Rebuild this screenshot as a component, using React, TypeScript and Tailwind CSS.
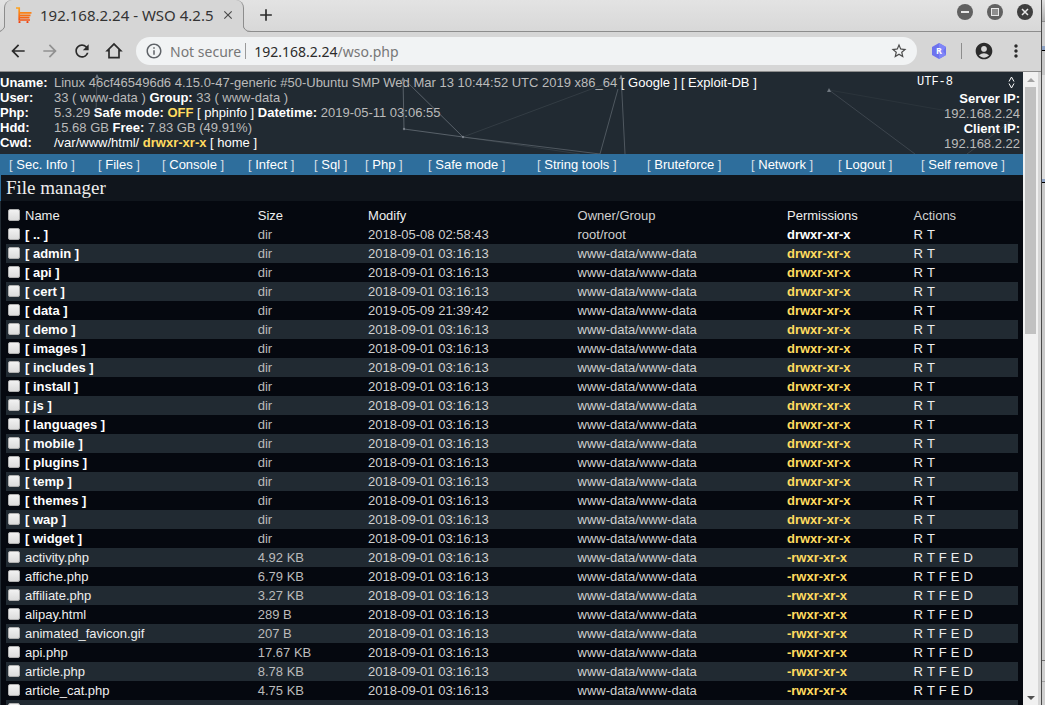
import type { ReactNode } from "react";
import {
  MdAccountCircle,
  MdAdd,
  MdArrowBack,
  MdArrowForward,
  MdClose,
  MdMoreVert,
  MdOutlineInfo,
  MdRefresh,
  MdStarBorder,
} from "react-icons/md";

type Entry = {
  name: string;
  size: string;
  modified: string;
  owner: string;
  perms: string;
};

const DEFAULT_DATE = "2018-09-01 03:16:13";
const DEFAULT_OWNER = "www-data/www-data";

function dir(name: string, modified = DEFAULT_DATE, owner = DEFAULT_OWNER): Entry {
  return { name, size: "dir", modified, owner, perms: "drwxr-xr-x" };
}

function file(name: string, size: string): Entry {
  return { name, size, modified: DEFAULT_DATE, owner: DEFAULT_OWNER, perms: "-rwxr-xr-x" };
}

const entries: Entry[] = [
  dir("..", "2018-05-08 02:58:43", "root/root"),
  dir("admin"),
  dir("api"),
  dir("cert"),
  dir("data", "2019-05-09 21:39:42"),
  dir("demo"),
  dir("images"),
  dir("includes"),
  dir("install"),
  dir("js"),
  dir("languages"),
  dir("mobile"),
  dir("plugins"),
  dir("temp"),
  dir("themes"),
  dir("wap"),
  dir("widget"),
  file("activity.php", "4.92 KB"),
  file("affiche.php", "6.79 KB"),
  file("affiliate.php", "3.27 KB"),
  file("alipay.html", "289 B"),
  file("animated_favicon.gif", "207 B"),
  file("api.php", "17.67 KB"),
  file("article.php", "8.78 KB"),
  file("article_cat.php", "4.75 KB"),
];

const menu = [
  "Sec. Info",
  "Files",
  "Console",
  "Infect",
  "Sql",
  "Php",
  "Safe mode",
  "String tools",
  "Bruteforce",
  "Network",
  "Logout",
  "Self remove",
];

export default function App() {
  return (
    <div className="flex h-screen overflow-hidden bg-[#d6d6d6] font-['Liberation_Sans',sans-serif]">
      <div className="flex min-w-0 flex-1 flex-col">
        <TabStrip />
        <Toolbar />
        <div className="flex min-h-0 flex-1 border-t border-[#8d8d8d] pr-[3px]">
          <main className="flex min-w-0 flex-1 flex-col overflow-hidden bg-[#05080f] text-[13px] leading-[15px] text-[#bbbbbb]">
            <ServerInfo />
            <Menu />
            <h1 className="border-l border-[#2e6e9c] bg-[#10151c] pl-[5px] font-['Liberation_Serif',serif] text-[19px] leading-[26px] text-[#eeeeee]">
              File manager
            </h1>
            <FileTable />
          </main>
          <Scrollbar />
        </div>
      </div>
      <Backdrop />
    </div>
  );
}

function TabStrip() {
  return (
    <div className="flex h-8 shrink-0 border-b border-[#8d8d8d] bg-linear-to-b from-[#e3e3e3] to-[#d8d8d8] font-['Noto_Sans',sans-serif]">
      <div className="relative ml-1 flex h-8 w-[240px] items-center rounded-t-lg border-x border-[#8d8d8d] bg-[#d6d6d6] pb-[2px] pl-[11px]">
        <TabFlare className="absolute bottom-0 -left-2 h-2 w-2" />
        <CartIcon />
        <span className="ml-2 text-[15px] leading-5 whitespace-nowrap text-[#333333]">192.168.2.24 - WSO 4.2.5</span>
        <button className="mr-2 ml-auto text-[#4a4a4a]" aria-label="Close tab">
          <MdClose className="h-[14px] w-[14px]" stroke="currentColor" aria-hidden />
        </button>
        <TabFlare className="absolute -right-2 bottom-0 h-2 w-2 -scale-x-100" />
      </div>
      <button className="ml-3 pb-[2px] text-[#2b2b2b]" aria-label="New tab">
        <MdAdd className="h-5 w-5" aria-hidden />
      </button>
      <div className="mr-2 ml-auto flex items-center gap-[14px] pb-2">
        <WindowButton label="Minimize">
          <path d="M4 8h8" stroke="#e8e8e8" strokeWidth="2" />
        </WindowButton>
        <WindowButton label="Maximize">
          <rect x="4.5" y="4.5" width="7" height="7" fill="#8f8f8f" stroke="#e8e8e8" />
        </WindowButton>
        <WindowButton label="Close">
          <path d="M5 5l6 6M11 5l-6 6" stroke="#e8e8e8" strokeWidth="1.5" />
        </WindowButton>
      </div>
    </div>
  );
}

function TabFlare({ className }: { className: string }) {
  return (
    <svg className={className} viewBox="0 0 8 8" aria-hidden>
      <path d="M0 8Q8 8 8 0V8Z" fill="#d6d6d6" />
      <path d="M0 7.5Q7.5 7.5 8 0" fill="none" stroke="#8d8d8d" />
    </svg>
  );
}

function CartIcon() {
  return (
    <svg className="h-4 w-4 shrink-0" viewBox="0 0 16 16" fill="none" aria-hidden>
      <defs>
        <linearGradient id="cart" gradientUnits="userSpaceOnUse" x1="0" y1="0" x2="0" y2="16">
          <stop offset="0" stopColor="#ffa81f" />
          <stop offset="1" stopColor="#f0420f" />
        </linearGradient>
      </defs>
      <path d="M0 1h3.200v12H14M3 5.800h12.500M3 8.300h11.500M3 10.700h10.500" stroke="url(#cart)" strokeWidth="1.700" />
      <circle cx="3.500" cy="15" r="1.100" fill="#f0420f" />
      <circle cx="11.500" cy="15" r="1.100" fill="#f0420f" />
    </svg>
  );
}

function WindowButton({ label, children }: { label: string; children: ReactNode }) {
  return (
    <button aria-label={label}>
      <svg className="h-4 w-4" viewBox="0 0 16 16" fill="none" aria-hidden>
        <circle cx="8" cy="8" r="8" fill={label === "Close" ? "#3f3f3f" : "#616161"} />
        {children}
      </svg>
    </button>
  );
}

function Toolbar() {
  return (
    <div className="flex h-[39px] shrink-0 items-center pr-[15px] pb-px pl-2 font-['Noto_Sans',sans-serif] text-[14px] text-[#2b2b2b]">
      <div className="flex gap-3">
        <button aria-label="Back">
          <MdArrowBack className="h-5 w-5" stroke="currentColor" aria-hidden />
        </button>
        <button className="text-[#919191]" aria-label="Forward">
          <MdArrowForward className="h-5 w-5" stroke="currentColor" aria-hidden />
        </button>
        <button aria-label="Reload">
          <MdRefresh className="h-5 w-5" stroke="currentColor" aria-hidden />
        </button>
        <button aria-label="Home">
          <svg className="h-5 w-5" viewBox="0 0 24 24" fill="currentColor" aria-hidden>
            <path fillRule="evenodd" d="M12 2 1.500 12.500H5V21h14v-8.500h3.500ZM12 5l5 5v9H7v-9Z" />
          </svg>
        </button>
      </div>
      <div className="ml-3 flex h-7 min-w-0 flex-1 items-center rounded-full bg-[#f1f3f4] pr-[9px] pl-[9px]">
        <MdOutlineInfo className="h-[18px] w-[18px] shrink-0 text-[#5f6368]" aria-hidden />
        <span className="ml-[7px] whitespace-nowrap text-[#777777]">Not secure</span>
        <span className="mr-2 ml-1 h-4 w-px bg-[#9a9a9a]" />
        <span className="flex-1 text-[#2b2b2b]">
          192.168.2.24<span className="text-[#777777]">/wso.php</span>
        </span>
        <button className="text-[#4a4a4a]" aria-label="Bookmark this page">
          <MdStarBorder className="h-[18px] w-[18px]" aria-hidden />
        </button>
      </div>
      <button className="ml-[14px]" aria-label="Extension">
        <svg className="h-4 w-4" viewBox="0 0 16 16" aria-hidden>
          <path d="M8 0l7 4v8l-7 4-7-4V4Z" fill="#6d72ee" />
          <path d="M8 0l7 4-3 4 3 4-7 4Z" fill="#7f86f7" />
          <text x="8" y="11" textAnchor="middle" fontSize="9" fontWeight="700" fill="#ffffff">
            R
          </text>
        </svg>
      </button>
      <span className="ml-[14px] h-4 w-px bg-[#8d8d8d]" />
      <button className="ml-3" aria-label="Profile">
        <MdAccountCircle className="h-5 w-5" aria-hidden />
      </button>
      <button className="ml-3" aria-label="Browser menu">
        <MdMoreVert className="h-5 w-5" aria-hidden />
      </button>
    </div>
  );
}

function Label({ children }: { children: ReactNode }) {
  return <b className="text-white">{children}</b>;
}

function HeaderLink({ children }: { children: ReactNode }) {
  return (
    <a className="text-white" href="#">
      [ {children} ]
    </a>
  );
}

function InfoRow({ label, children }: { label: string; children: ReactNode }) {
  return (
    <>
      <dt className="font-bold text-white">{label}</dt>
      <dd className="whitespace-nowrap">{children}</dd>
    </>
  );
}

function ServerInfo() {
  return (
    <section className="relative flex h-[82px] shrink-0 justify-between bg-[#212a32] pt-[3px]">
      <Constellation />
      <dl className="grid grid-cols-[54px_1fr] content-start">
        <InfoRow label="Uname:">
          Linux 46cf465496d6 4.15.0-47-generic #50-Ubuntu SMP Wed Mar 13 10:44:52 UTC 2019 x86_64{" "}
          <HeaderLink>Google</HeaderLink> <HeaderLink>Exploit-DB</HeaderLink>
        </InfoRow>
        <InfoRow label="User:">
          33 ( www-data ) <Label>Group:</Label> 33 ( www-data )
        </InfoRow>
        <InfoRow label="Php:">
          5.3.29 <Label>Safe mode:</Label> <b className="text-[#ffdb5f]">OFF</b> <HeaderLink>phpinfo</HeaderLink>{" "}
          <Label>Datetime:</Label> 2019-05-11 03:06:55
        </InfoRow>
        <InfoRow label="Hdd:">
          15.68 GB <Label>Free:</Label> 7.83 GB (49.91%)
        </InfoRow>
        <InfoRow label="Cwd:">
          <a className="text-white" href="#">
            /var/www/html/
          </a>{" "}
          <b className="text-[#ffdb5f]">drwxr-xr-x</b> <HeaderLink>home</HeaderLink>
        </InfoRow>
      </dl>
      <div className="flex flex-col items-end pr-[3px] text-right">
        <div className="flex h-4 items-start">
          <select
            className="w-[91px] appearance-none bg-transparent font-['Liberation_Mono',monospace] text-[12px] leading-[14px] text-white"
            aria-label="Charset"
          >
            <option>UTF-8</option>
          </select>
          <svg className="mr-[5px] h-[14px] w-[7px]" viewBox="0 0 7 14" fill="none" stroke="#ffffff" aria-hidden>
            <path d="M1 6.500 3.500 2 6 6.500M1 8.500 3.500 13 6 8.500" />
          </svg>
        </div>
        <Label>Server IP:</Label>
        <span>192.168.2.24</span>
        <Label>Client IP:</Label>
        <span>192.168.2.22</span>
      </div>
    </section>
  );
}

function Constellation() {
  return (
    <svg
      className="pointer-events-none absolute inset-0 h-full w-full"
      viewBox="0 0 1023 82"
      preserveAspectRatio="none"
      fill="none"
      stroke="#7d858e"
      aria-hidden
    >
      <path d="M97 3 96 42" strokeOpacity=".4" />
      <path d="M403 6 404 57 463 65 403 6" strokeOpacity=".6" />
      <path d="M463 65 600 82M618 17 600 82M621 3 625 82" strokeOpacity=".5" />
      <path d="M463 65 621 6M463 65 580 82" strokeOpacity=".2" />
      <path d="M829 18 915 82M967 82 1010 50" strokeOpacity=".3" />
      <path d="M829 18 1010 50" strokeOpacity=".1" />
      <g fill="#8f969e" fillOpacity=".7" stroke="none">
        <path d="M97 2l2 4h-4ZM403 5l2 4h-4ZM621 3l2 4h-4ZM829 16l2 4h-4Z" />
        <circle cx="404" cy="57" r="1.200" />
        <circle cx="463" cy="65" r="1.200" />
      </g>
    </svg>
  );
}

function Menu() {
  return (
    <nav className="grid shrink-0 grid-cols-[89fr_64fr_86fr_66fr_51fr_63fr_109fr_110fr_104fr_87fr_83fr_102fr] bg-[#2e6e9c] pl-[9px] leading-[21px] whitespace-nowrap text-[#d5dde4]">
      {menu.map((item) => (
        <span key={item}>
          [{" "}
          <a className="text-white" href="#">
            {item}
          </a>{" "}
          ]
        </span>
      ))}
    </nav>
  );
}

function Check({ label }: { label: string }) {
  return (
    <input
      type="checkbox"
      aria-label={label}
      className="mb-[2px] ml-[2px] block h-3 w-3 appearance-none rounded-[2px] border border-[#b0b0b0] bg-linear-to-b from-[#f2f2f2] to-[#dcdcdc]"
    />
  );
}

function FileTable() {
  return (
    <div className="min-h-0 flex-1 overflow-hidden border-x border-l-[#212a32] border-r-[#05080f] pt-[5px] pr-1 pl-[5px]">
      <table className="w-full table-fixed leading-[19px] whitespace-nowrap">
        <colgroup>
          <col className="w-[19px]" />
          <col className="w-[23%]" />
          <col className="w-[10.9%]" />
          <col className="w-[20.7%]" />
          <col className="w-[20.7%]" />
          <col className="w-[12.5%]" />
          <col />
        </colgroup>
        <thead>
          <tr className="h-[19px] text-left text-[#eeeeee] [&>th]:font-normal">
            <th>
              <Check label="Select all" />
            </th>
            <th>Name</th>
            <th>Size</th>
            <th>Modify</th>
            <th className="text-[#d0d0d0]">Owner/Group</th>
            <th>Permissions</th>
            <th className="text-[#d0d0d0]">Actions</th>
          </tr>
        </thead>
        <tbody>
          {entries.map((entry) => (
            <FileRow entry={entry} key={entry.name} />
          ))}
          {/* next row, cut off by the bottom of the window */}
          <tr className="h-[19px] bg-[#212a32]">
            <td>
              <Check label="Select next entry" />
            </td>
            <td colSpan={6} />
          </tr>
        </tbody>
      </table>
    </div>
  );
}

function FileRow({ entry }: { entry: Entry }) {
  const isDir = entry.size === "dir";
  const actions = isDir ? ["R", "T"] : ["R", "T", "F", "E", "D"];
  return (
    <tr className="h-[19px] even:bg-[#212a32]">
      <td>
        <Check label={`Select ${entry.name}`} />
      </td>
      <td>
        <a className={isDir ? "font-bold text-white" : "text-[#eeeeee]"} href="#">
          {isDir ? `[ ${entry.name} ]` : entry.name}
        </a>
      </td>
      <td>{entry.size}</td>
      <td className="text-[#d0d0d0]">{entry.modified}</td>
      <td className="text-[#d0d0d0]">{entry.owner}</td>
      <td>
        <a className={`font-bold ${entry.name === ".." ? "text-white" : "text-[#ffdb5f]"}`} href="#">
          {entry.perms}
        </a>
      </td>
      <td>
        <span className="flex gap-1 text-[#eeeeee]">
          {actions.map((action) => (
            <a href="#" key={action}>
              {action}
            </a>
          ))}
        </span>
      </td>
    </tr>
  );
}

function Scrollbar() {
  return (
    <div className="flex w-[15px] shrink-0 flex-col items-center bg-[#f1f1f1]">
      <button className="flex h-[15px] items-center" aria-label="Scroll up">
        <svg className="h-1 w-2" viewBox="0 0 8 4" fill="#a3a3a3" aria-hidden>
          <path d="M4 0 8 4H0Z" />
        </svg>
      </button>
      <div className="min-h-0 w-[11px] flex-1">
        <div className="h-[41%] bg-[#c1c1c1]" />
      </div>
      <button className="flex h-[15px] items-center" aria-label="Scroll down">
        <svg className="h-1 w-2" viewBox="0 0 8 4" fill="#505050" aria-hidden>
          <path d="M0 0H8L4 4Z" />
        </svg>
      </button>
    </div>
  );
}

// Sliver of the window lying behind this one
function Backdrop() {
  return (
    <div className="flex w-1 shrink-0 flex-col border-l border-[#4a4a4a] bg-[#cfcfcf]">
      <div className="h-[21px] bg-linear-to-b from-[#e0e0e0] to-[#b0b0b0]" />
      <div className="h-[25px] border-t border-[#8d8d8d]" />
      <div className="h-[5px] border-b border-black bg-[#8ea3c4]" />
      <div className="h-[24px] bg-[#c6c6c6]" />
      <div className="h-[104px] bg-[#dddddd]" />
      <div className="h-1 border-b border-black bg-[#8ea3c4]" />
      <div className="flex-1 bg-[#c9c9c9]" />
      <div className="h-[21px] border-t border-[#707070]" />
      <div className="h-6 border-t border-[#a0a0a0]" />
    </div>
  );
}
